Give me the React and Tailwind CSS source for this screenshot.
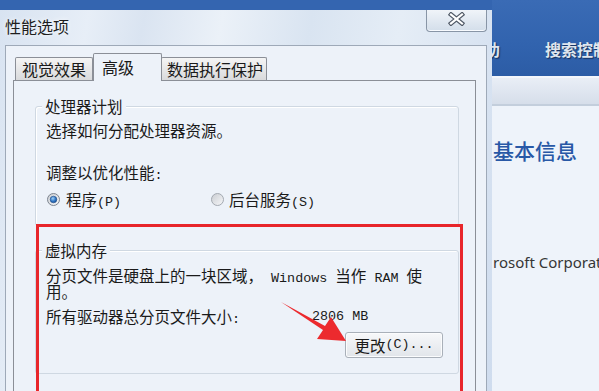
import React from 'react';

const cjk = "font-['Noto_Sans_CJK_SC','Noto_Sans',sans-serif]";
const mono = "font-['Liberation_Mono',monospace] text-[13.4px]";
const monoIn = `${mono} leading-[0]`;

function Radio({ checked }) {
  return (
    <svg width="13" height="13" viewBox="0 0 13 13" className="shrink-0">
      <defs>
        <linearGradient id={checked ? 'rf1' : 'rf0'} x1="0" y1="0" x2="1" y2="1">
          <stop offset="0" stopColor="#c9ccd1" />
          <stop offset="1" stopColor="#f7f8fa" />
        </linearGradient>
        <radialGradient id="dot" cx="0.4" cy="0.35" r="0.7">
          <stop offset="0" stopColor="#9fd0f5" />
          <stop offset="0.6" stopColor="#2f75c4" />
          <stop offset="1" stopColor="#1a4f94" />
        </radialGradient>
      </defs>
      <circle cx="6.5" cy="6.5" r="6" fill={`url(#${checked ? 'rf1' : 'rf0'})`} stroke={checked ? '#7d8590' : '#a3a9b1'} strokeWidth="1" />
      {checked && <circle cx="6.5" cy="6.5" r="3.3" fill="url(#dot)" stroke="#1d4a86" strokeWidth="0.6" />}
    </svg>
  );
}

function GroupBox({ title, className = '', children }) {
  return (
    <div className={`w-[424px] border border-[#cfd8e2] rounded-[3px] pl-[10px] shadow-[inset_1px_1px_0_#ffffff] ${className}`}>
      <div className="-mt-[10px] -ml-[4px] w-fit px-[3px] bg-[#edf2f9] leading-[18px]">{title}</div>
      {children}
    </div>
  );
}

export default function App() {
  return (
    <div className={`relative w-[599px] h-[391px] overflow-hidden flex bg-[#3465b0] text-[#1a1a1a] ${cjk}`}>
      {/* dialog */}
      <div className="w-[492px] shrink-0 mt-[10px] flex flex-col bg-[linear-gradient(100deg,#d8e3f1_0%,#e7eef7_16%,#dae4f1_26%,#ebf1f8_40%,#d9e4f1_56%,#e5edf6_72%,#cfdcee_100%)]">
        {/* title bar */}
        <div className="h-[35px] shrink-0 flex items-start">
          <div className="pl-[5px] pt-[6px] text-[16px] leading-[20px] text-[#1e1e1e] [text-shadow:0_0_5px_#ffffff]">性能选项</div>
          <div className="ml-auto mr-[5px] w-[61px] h-[22px] border-x border-b border-[#8895a6] rounded-b-[4px] bg-gradient-to-b from-[#f0f4f9] to-[#d3deea] shadow-[inset_0_-1px_0_#f8fbff] flex justify-center pt-[2px]">
            <svg width="17" height="14" viewBox="0 0 17 14">
              <path d="M3 2.5 L14 11.5 M14 2.5 L3 11.5" stroke="#4f5865" strokeWidth="4.4" strokeLinecap="square" fill="none" />
              <path d="M3 2.5 L14 11.5 M14 2.5 L3 11.5" stroke="#ffffff" strokeWidth="2.2" strokeLinecap="square" fill="none" />
            </svg>
          </div>
        </div>

        {/* client area */}
        <div className="flex-1 ml-[5px] w-[482px] border-l border-t border-r border-[#9ea9b8] bg-[#edf2f9] pt-[7px]">
          {/* tabs */}
          <div className="relative z-10 flex items-end h-[27px] pl-[9px] text-[16px]">
            <div className="w-[78px] h-[23px] border border-b-0 border-[#8b8f97] rounded-t-[2px] bg-gradient-to-b from-[#f5f5f5] to-[#d9dadc] pl-[6px] leading-[22px]">视觉效果</div>
            <div className="w-[69px] h-[28px] -mb-px border border-b-0 border-[#8b8f97] rounded-t-[2px] bg-[#edf2f9] pl-[8px] leading-[26px]">高级</div>
            <div className="w-[106px] h-[23px] -ml-px border border-b-0 border-[#8b8f97] rounded-t-[2px] bg-gradient-to-b from-[#f5f5f5] to-[#d9dadc] pl-[5px] leading-[22px]">数据执行保护</div>
          </div>

          {/* tab panel */}
          <div className="ml-[7px] w-[463px] h-[400px] border border-[#8b8f97] bg-[#edf2f9] pt-[25px] pl-[21px] text-[15.5px]">
            <GroupBox title="处理器计划" className="pb-[16px]">
              <div className="mt-[5px] leading-[20px]">选择如何分配处理器资源。</div>
              <div className="mt-[22px] leading-[20px]">调整以优化性能<span className={monoIn}>:</span></div>
              <div className="mt-[7px] h-[20px] flex items-center">
                <div className="w-[165px] flex items-center gap-[6px] pl-[1px]">
                  <Radio checked />
                  <span className="leading-[20px]">程序<span className={monoIn}>(P)</span></span>
                </div>
                <div className="flex items-center gap-[5px]">
                  <Radio />
                  <span className="leading-[20px]">后台服务<span className={monoIn}>(S)</span></span>
                </div>
              </div>
            </GroupBox>

            <GroupBox title="虚拟内存" className="mt-[24px] pb-[15px]">
              <div className="mt-[8px] leading-[16px]">
                分页文件是硬盘上的一块区域，<span className={monoIn}> Windows </span>当作<span className={monoIn}> RAM </span>使
                <br />
                用。
              </div>
              <div className="mt-[9px] flex leading-[16px]">
                <div className="w-[266px]">所有驱动器总分页文件大小<span className={monoIn}>:</span></div>
                <div className={`${mono} leading-[16px] pt-[1px]`}>2806 MB</div>
              </div>
              <div className="mt-[7px] flex justify-end pr-[15px]">
                <div className="w-[98px] h-[26px] border border-[#a9b0b9] rounded-[3px] bg-gradient-to-b from-[#f7f8fa] to-[#e1e5ea] shadow-[inset_0_0_0_1px_#fbfcfd] flex items-center justify-center leading-[20px]">
                  更改<span className={monoIn}>(C)...</span>
                </div>
              </div>
            </GroupBox>
          </div>
        </div>
      </div>

      {/* window behind */}
      <div className="flex-1 min-w-0 flex flex-col overflow-hidden">
        <div className="h-[76px] shrink-0 bg-[linear-gradient(180deg,#3a6bb5_0%,#3163ae_60%,#2c5ca5_100%)] flex items-start pt-[39px] whitespace-nowrap text-[16px] leading-[20px] font-bold text-[#dfe6ef] [text-shadow:1px_1px_1px_#162f5c]">
          <span className="-ml-[8px]">助</span>
          <span className="ml-[45px]">搜索控制面板</span>
        </div>
        <div className="h-[2px] shrink-0 bg-[#f3f6fb]" />
        <div className="h-[26px] shrink-0 bg-gradient-to-b from-[#e9eef6] to-[#d6deea]" />
        <div className="h-[2px] shrink-0 bg-[#c3cedc]" />
        <div className="flex-1 bg-[#eef3fa] pl-[1px] pt-[31px] whitespace-nowrap">
          <div className="text-[21px] leading-[26px] text-[#2858a6] font-medium">基本信息</div>
          <div className="mt-[89px] font-['Noto_Sans',sans-serif] text-[15px] leading-[20px] text-[#363636]">rosoft Corporation</div>
        </div>
      </div>

      {/* annotation */}
      <div className="absolute left-[36px] top-[224px] w-[427px] h-[200px] border-[3px] border-[#e8262b]" />
      <svg className="absolute left-0 top-0 pointer-events-none" width="599" height="391" viewBox="0 0 599 391">
        <polygon points="281,302 325,326 331,317 346,341 317,339 323,330" fill="#ec2a2e" />
      </svg>
    </div>
  );
}
